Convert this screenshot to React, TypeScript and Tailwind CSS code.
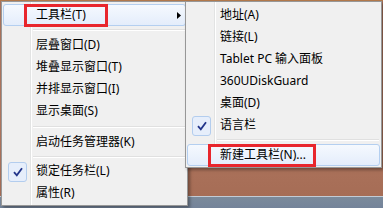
import React from 'react';

type Item =
  | { kind: 'item'; label: string; checked?: boolean; arrow?: boolean; hot?: boolean; mark?: string }
  | { kind: 'sep'; cls: string };

const font = { fontFamily: '"Noto Sans", "Noto Sans CJK SC", sans-serif' };

const mainItems: Item[] = [
  { kind: 'item', label: '工具栏(T)', arrow: true, hot: true, mark: 'w-[84px]' },
  { kind: 'sep', cls: 'h-[8px] pt-[3px]' },
  { kind: 'item', label: '层叠窗口(D)' },
  { kind: 'item', label: '堆叠显示窗口(T)' },
  { kind: 'item', label: '并排显示窗口(I)' },
  { kind: 'item', label: '显示桌面(S)' },
  { kind: 'sep', cls: 'h-[9px] pt-[4px]' },
  { kind: 'item', label: '启动任务管理器(K)' },
  { kind: 'sep', cls: 'h-[7px] pt-[3px]' },
  { kind: 'item', label: '锁定任务栏(L)', checked: true },
  { kind: 'item', label: '属性(R)' },
];

const subItems: Item[] = [
  { kind: 'item', label: '地址(A)' },
  { kind: 'item', label: '链接(L)' },
  { kind: 'item', label: 'Tablet PC 输入面板' },
  { kind: 'item', label: '360UDiskGuard' },
  { kind: 'item', label: '桌面(D)' },
  { kind: 'item', label: '语言栏', checked: true },
  { kind: 'sep', cls: 'h-[8px] pt-[3px]' },
  { kind: 'item', label: '新建工具栏(N)...', hot: true, mark: 'w-[108px]' },
];

function Check() {
  return (
    <span className="absolute left-[4px] top-px flex h-[20px] w-[19px] items-center justify-center rounded-[3px] border border-[#b3cdee] bg-[#e6eefb]">
      <svg width="10" height="10" viewBox="0 0 10 10">
        <path d="M1 5.2 L3.8 8.4 L9 1.2" fill="none" stroke="#23358a" strokeWidth="1.8" />
      </svg>
    </span>
  );
}

function Row({ item }: { item: Extract<Item, { kind: 'item' }> }) {
  return (
    <div
      className={
        item.hot
          ? 'relative flex h-[22px] items-center rounded-[3px] border border-[#b4cff0] bg-[linear-gradient(to_bottom,#f5f9fe,#e4edfb)] pl-[32px]'
          : 'relative flex h-[22px] items-center border border-transparent pl-[32px]'
      }
    >
      {item.checked && <Check />}
      <span className="text-[12px] leading-[16px] text-black">{item.label}</span>
      {item.arrow && (
        <svg className="ml-auto mr-[4px]" width="4" height="7" viewBox="0 0 4 7">
          <path d="M0 0 L4 3.5 L0 7 Z" fill="#000" />
        </svg>
      )}
      {item.mark && (
        <span className={`absolute left-[20px] top-[-1px] h-[23px] border-[3px] border-[#e8262d] ${item.mark}`} />
      )}
    </div>
  );
}

function Menu({ items, className }: { items: Item[]; className: string }) {
  return (
    <div
      className={`border border-[#979797] bg-[linear-gradient(to_right,#f0f0f0_28px,#e2e3e3_28px,#e2e3e3_29px,#ffffff_29px,#ffffff_30px,#f0f0f0_30px)] px-px shadow-[2px_2px_3px_rgba(0,0,0,0.35)] ${className}`}
      style={font}
    >
      {items.map((it, i) =>
        it.kind === 'sep' ? (
          <div key={i} className={`pl-[30px] pr-px ${it.cls}`}>
            <div className="h-px bg-[#e0e0e0]" />
            <div className="h-px bg-white" />
          </div>
        ) : (
          <Row key={i} item={it} />
        ),
      )}
    </div>
  );
}

export default function App() {
  return (
    <div className="relative h-[208px] w-[383px] overflow-hidden bg-[linear-gradient(to_bottom,#b57a4c_0,#b57a4c_1px,#a9725b_1px,#b07760_120px,#a66d56_196px,#c3ccd6_196px,#c3ccd6_197px,#7b8a9b_197px,#74849a_208px)]">
      <Menu items={mainItems} className="ml-px mt-px w-[187px] pt-[2px] pb-px" />
      <Menu items={subItems} className="absolute left-[185px] top-px w-[197px] pt-[2px] pb-px" />
    </div>
  );
}
